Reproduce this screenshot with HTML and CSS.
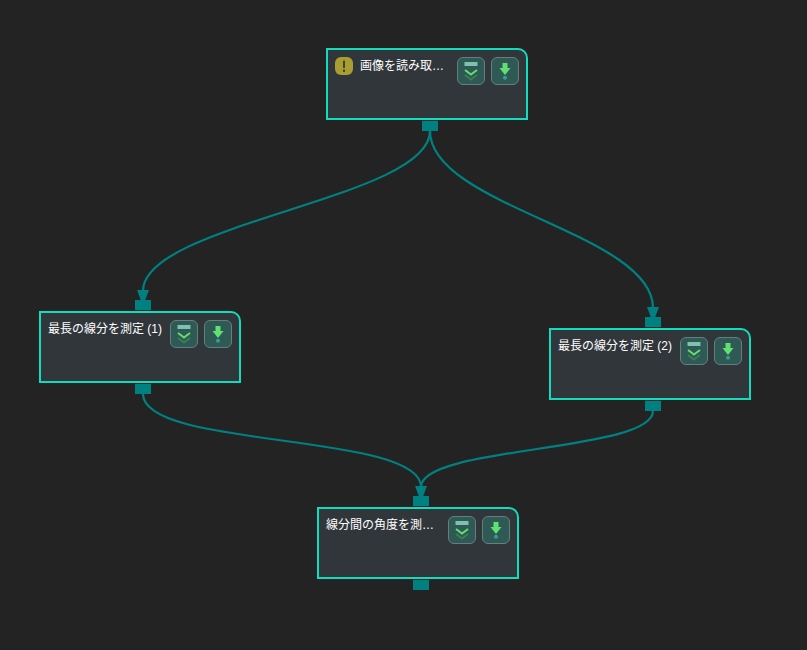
FILE: index.html
```html
<!DOCTYPE html>
<html lang="ja">
<head>
<meta charset="utf-8">
<title>Flow</title>
<link rel="stylesheet" href="styles.css">
</head>
<body>
<main class="canvas">
  <svg class="wires" width="807" height="650" viewBox="0 0 807 650">
    <g class="wire">
      <path d="M430 131C430 199 143 223 143 291"/>
      <path d="M430 131C430 206 653 233 653 308"/>
      <path d="M143 394C143 449 421 432 421 487"/>
      <path d="M653 411C653 452 421 446 421 487"/>
    </g>
    <g class="head">
      <path d="M137 290H149L143 306Z"/>
      <path d="M647 307H659L653 323Z"/>
      <path d="M415 486H427L421 502Z"/>
    </g>
  </svg>

  <section class="node node-read">
    <span class="warn"><svg width="18" height="18" viewBox="0 0 18 18"><rect width="18" height="18" rx="6" class="warn-bg"/><rect x="8" y="3.500" width="2" height="7.500" class="warn-mark"/><rect x="8" y="12.500" width="2" height="2.500" class="warn-mark"/></svg></span>
    <h2 class="title">画像を読み取…</h2>
    <div class="actions">
      <button class="btn"><svg width="20" height="20" viewBox="0 0 20 20"><rect x="3.500" y="1" width="13" height="4" class="i-bar"/><path d="M4 9l6 4.500 6-4.500" class="i-chev"/><path d="M4 14l6 4.500 6-4.500" class="i-chev2"/></svg></button>
      <button class="btn"><svg width="20" height="20" viewBox="0 0 20 20"><path d="M7.500 2h5v5h3L10 14 4.500 7h3z" class="i-arrow"/><circle cx="10" cy="16.700" r="2" class="i-dot"/></svg></button>
    </div>
    <span class="port port-out"></span>
  </section>

  <section class="node node-left">
    <h2 class="title">最長の線分を測定 (1)</h2>
    <div class="actions">
      <button class="btn"><svg width="20" height="20" viewBox="0 0 20 20"><rect x="3.500" y="1" width="13" height="4" class="i-bar"/><path d="M4 9l6 4.500 6-4.500" class="i-chev"/><path d="M4 14l6 4.500 6-4.500" class="i-chev2"/></svg></button>
      <button class="btn"><svg width="20" height="20" viewBox="0 0 20 20"><path d="M7.500 2h5v5h3L10 14 4.500 7h3z" class="i-arrow"/><circle cx="10" cy="16.700" r="2" class="i-dot"/></svg></button>
    </div>
    <span class="port port-in"></span>
    <span class="port port-out"></span>
  </section>

  <section class="node node-right">
    <h2 class="title">最長の線分を測定 (2)</h2>
    <div class="actions">
      <button class="btn"><svg width="20" height="20" viewBox="0 0 20 20"><rect x="3.500" y="1" width="13" height="4" class="i-bar"/><path d="M4 9l6 4.500 6-4.500" class="i-chev"/><path d="M4 14l6 4.500 6-4.500" class="i-chev2"/></svg></button>
      <button class="btn"><svg width="20" height="20" viewBox="0 0 20 20"><path d="M7.500 2h5v5h3L10 14 4.500 7h3z" class="i-arrow"/><circle cx="10" cy="16.700" r="2" class="i-dot"/></svg></button>
    </div>
    <span class="port port-in"></span>
    <span class="port port-out"></span>
  </section>

  <section class="node node-bottom">
    <h2 class="title">線分間の角度を測…</h2>
    <div class="actions">
      <button class="btn"><svg width="20" height="20" viewBox="0 0 20 20"><rect x="3.500" y="1" width="13" height="4" class="i-bar"/><path d="M4 9l6 4.500 6-4.500" class="i-chev"/><path d="M4 14l6 4.500 6-4.500" class="i-chev2"/></svg></button>
      <button class="btn"><svg width="20" height="20" viewBox="0 0 20 20"><path d="M7.500 2h5v5h3L10 14 4.500 7h3z" class="i-arrow"/><circle cx="10" cy="16.700" r="2" class="i-dot"/></svg></button>
    </div>
    <span class="port port-in"></span>
    <span class="port port-out"></span>
  </section>
</main>
</body>
</html>
```
FILE: styles.css
```css
* { box-sizing: border-box; }
html, body { margin: 0; height: 100%; background: #232323; overflow: hidden; }
.canvas { position: relative; width: 807px; height: 650px; background: #232323; }
.wires { position: absolute; left: 0; top: 0; }
.wire path { fill: none; stroke: #008080; stroke-width: 2.2; }
.head path { fill: #008080; }
.node {
  position: absolute; width: 202px; height: 72px;
  display: flex; align-items: flex-start; gap: 6px;
  padding: 7px 7px 0 7px;
  background: #31363b; border: 2px solid #12dcbe;
  border-radius: 0 10px 0 0;
}
.node-read { left: 326px; top: 48px; }
.node-left { left: 39px; top: 311px; }
.node-right { left: 549px; top: 328px; }
.node-bottom { left: 317px; top: 507px; }
.title {
  flex: 1; min-width: 0; margin: 1px 0 0;
  font-family: "Liberation Sans", "Noto Sans CJK JP", sans-serif;
  font-size: 12px; font-weight: 400; line-height: 16px; color: #fff;
  white-space: nowrap;
}
.warn { flex: none; width: 18px; height: 18px; margin-right: 1px; }
.warn svg { display: block; }
.warn-bg { fill: #aa9e32; }
.warn-mark { fill: #45452e; }
.actions { flex: none; display: flex; gap: 6px; }
.btn {
  width: 28px; height: 28px; padding: 0;
  display: flex; align-items: center; justify-content: center;
  background: #2f5954; border: 1px solid #63807f; border-radius: 6px;
}
.i-bar { fill: #7cc2ae; }
.i-chev { fill: none; stroke: #5fe06f; stroke-width: 2; }
.i-chev2 { fill: none; stroke: #3b7d55; stroke-width: 2; }
.i-arrow { fill: #5fe06f; }
.i-dot { fill: #35a08e; }
.port { position: absolute; width: 16px; height: 10px; background: #008080; }
.port-out { left: 94px; bottom: -13px; }
.port-in { left: 94px; top: -13px; }
```
